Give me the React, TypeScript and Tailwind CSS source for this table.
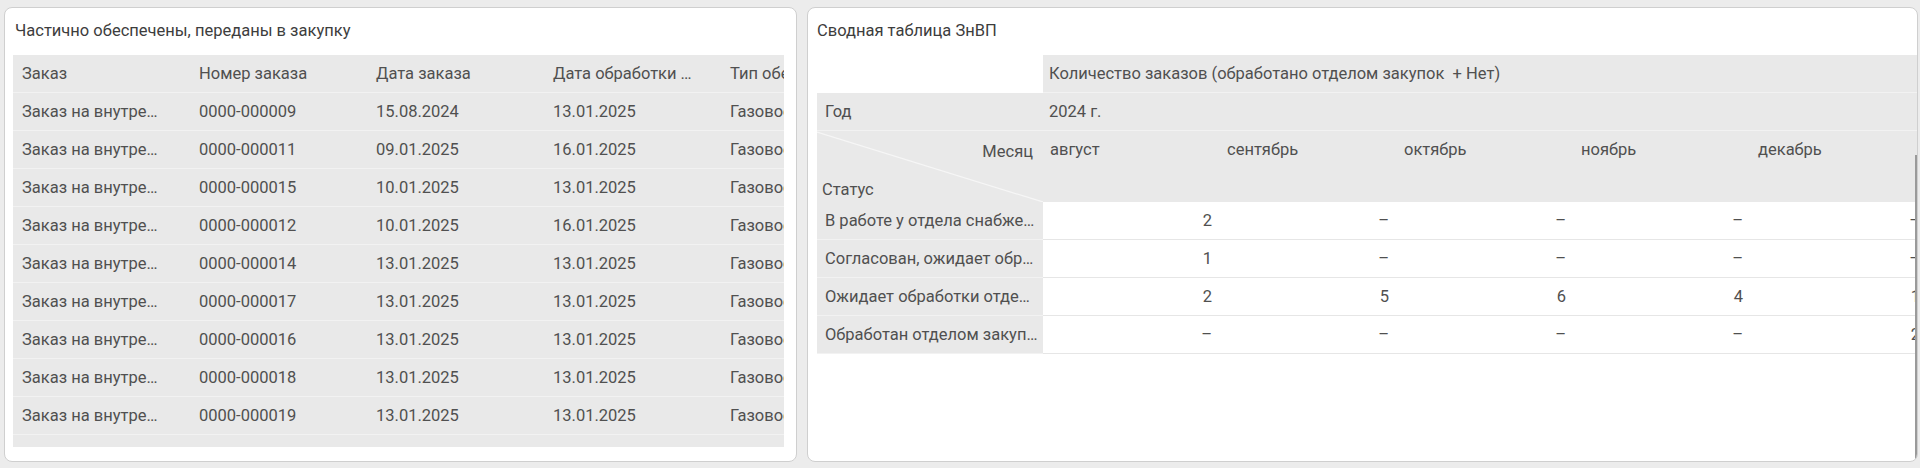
const orders = [
  ["0000-000009", "15.08.2024", "13.01.2025"],
  ["0000-000011", "09.01.2025", "16.01.2025"],
  ["0000-000015", "10.01.2025", "13.01.2025"],
  ["0000-000012", "10.01.2025", "16.01.2025"],
  ["0000-000014", "13.01.2025", "13.01.2025"],
  ["0000-000017", "13.01.2025", "13.01.2025"],
  ["0000-000016", "13.01.2025", "13.01.2025"],
  ["0000-000018", "13.01.2025", "13.01.2025"],
  ["0000-000019", "13.01.2025", "13.01.2025"],
];

const months = ["август", "сентябрь", "октябрь", "ноябрь", "декабрь"];

const statuses: [string, string[]][] = [
  ["В работе у отдела снабжения", ["2", "–", "–", "–", "–"]],
  ["Согласован, ожидает обработки", ["1", "–", "–", "–", "–"]],
  ["Ожидает обработки отделом закупок", ["2", "5", "6", "4", "1"]],
  ["Обработан отделом закупок", ["–", "–", "–", "–", "2"]],
];

function Cell({ children }: { children: React.ReactNode }) {
  return (
    <div className="w-[177px] shrink-0 pl-[9px] pr-[26px] truncate leading-[37px]">
      {children}
    </div>
  );
}

function OrdersPanel() {
  return (
    <div className="w-[793px] h-[455px] shrink-0 rounded-[8px] border border-[#cfcfcf] bg-white flex flex-col overflow-hidden">
      <div className="h-[47px] shrink-0 flex items-center pl-[10px] text-[#3d3d3d]">
        Частично обеспечены, переданы в закупку
      </div>
      <div className="ml-[8px] w-[771px] h-[392px] bg-[#e9e9e9] overflow-hidden">
        <div className="flex h-[38px] border-b border-[#f2f2f2]">
          <Cell>Заказ</Cell>
          <Cell>Номер заказа</Cell>
          <Cell>Дата заказа</Cell>
          <Cell>Дата обработки закупкой</Cell>
          <Cell>Тип обеспечения</Cell>
        </div>
        {orders.map((o) => (
          <div key={o[0]} className="flex h-[38px] border-b border-[#f2f2f2]">
            <Cell>Заказ на внутреннее потребление</Cell>
            <Cell>{o[0]}</Cell>
            <Cell>{o[1]}</Cell>
            <Cell>{o[2]}</Cell>
            <Cell>Газовое оборудование</Cell>
          </div>
        ))}
      </div>
    </div>
  );
}

function PivotPanel() {
  return (
    <div className="relative flex-1 h-[455px] rounded-[8px] border border-[#cfcfcf] bg-white flex flex-col overflow-hidden">
      <div className="h-[47px] shrink-0 flex items-center pl-[9px] text-[#3d3d3d]">
        Сводная таблица ЗнВП
      </div>
      <div className="ml-[9px] overflow-hidden">
        <div className="w-[1111px]">
          <div className="flex h-[38px]">
            <div className="w-[226px] shrink-0 bg-white" />
            <div className="flex-1 bg-[#e9e9e9] border-b border-[#f2f2f2] pl-[6px] leading-[37px] whitespace-pre">
              Количество заказов (обработано отделом закупок  + Нет)
            </div>
          </div>
          <div className="flex h-[38px] bg-[#e9e9e9] border-b border-[#f2f2f2] leading-[37px]">
            <div className="w-[226px] shrink-0 pl-[8px]">Год</div>
            <div className="pl-[6px]">2024 г.</div>
          </div>
          <div className="flex h-[71px] bg-[#e9e9e9]">
            <div className="relative w-[226px] shrink-0 flex flex-col justify-between pt-[11px] pb-[2px] leading-[20px]">
              <svg className="absolute inset-0" width="226" height="71">
                <line x1="0" y1="1" x2="226" y2="71" stroke="#f6f6f6" strokeWidth="1.2" />
              </svg>
              <div className="relative text-right pr-[10px]">Месяц</div>
              <div className="relative pl-[5px]">Статус</div>
            </div>
            {months.map((m) => (
              <div key={m} className="w-[177px] shrink-0 pl-[7px] pt-[9px] leading-[20px]">
                {m}
              </div>
            ))}
          </div>
          {statuses.map(([label, vals]) => (
            <div key={label} className="flex h-[38px] leading-[37px]">
              <div className="w-[226px] shrink-0 bg-[#e9e9e9] border-b border-[#f2f2f2] pl-[8px] pr-[4px] truncate">
                {label}
              </div>
              {vals.map((v, i) => (
                <div key={i} className="w-[177px] shrink-0 bg-white border-b border-[#e6e6e6] text-right pr-[8px]">
                  {v}
                </div>
              ))}
            </div>
          ))}
        </div>
      </div>
      <div className="absolute right-0 top-[147px] bottom-[2px] w-[2px] bg-[#9a9a9a]" />
    </div>
  );
}

export default function App() {
  return (
    <div className="w-[1920px] h-[468px] bg-[#ececec] flex gap-[10px] pl-[4px] pr-[2px] pt-[7px] font-[Roboto,sans-serif] text-[16.5px] text-[#505050]">
      <OrdersPanel />
      <PivotPanel />
    </div>
  );
}
